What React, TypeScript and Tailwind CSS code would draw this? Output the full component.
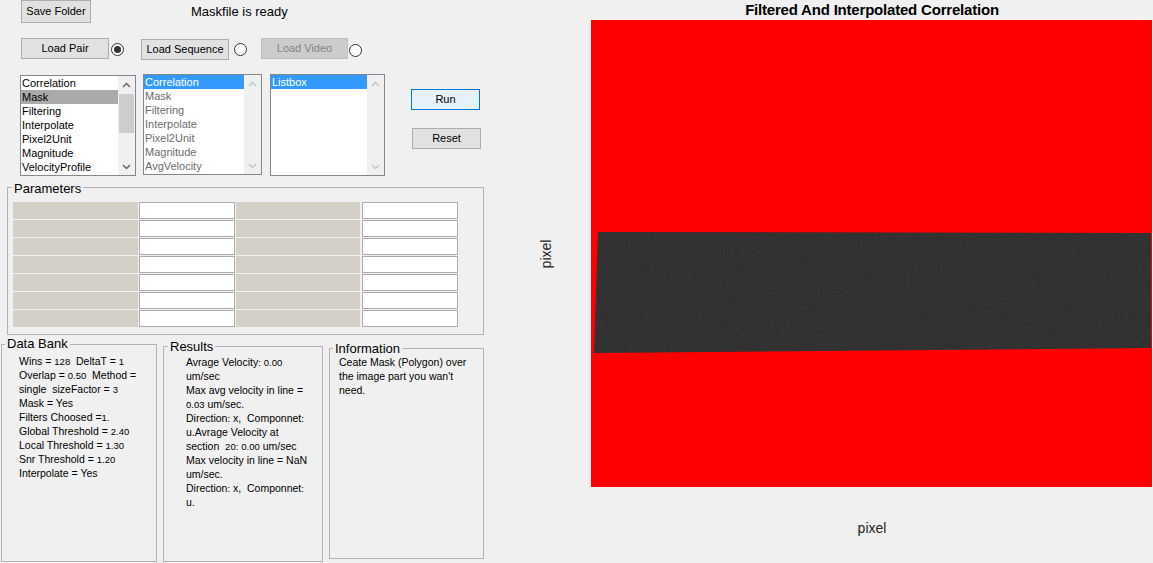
import React from "react";

function Btn({
  label,
  className = "",
  variant = "normal",
}: {
  label: string;
  className?: string;
  variant?: "normal" | "default" | "disabled";
}) {
  const v =
    variant === "default"
      ? "border-[#0078d7] bg-[#e5f1fb] text-black"
      : variant === "disabled"
      ? "border-[#bfbfbf] bg-[#cccccc] text-[#838383]"
      : "border-[#adadad] bg-[#e1e1e1] text-black";
  return (
    <div
      className={`shrink-0 border flex items-center justify-center text-[11px] leading-none whitespace-nowrap ${v} ${className}`}
    >
      {label}
    </div>
  );
}

function Radio({ checked = false, className = "" }: { checked?: boolean; className?: string }) {
  return (
    <div
      className={`shrink-0 w-[13px] h-[13px] rounded-full border border-[#333333] bg-white flex items-center justify-center ${className}`}
    >
      {checked && <div className="w-[7px] h-[7px] rounded-full bg-[#333333]" />}
    </div>
  );
}

function Chevron({ up, color }: { up: boolean; color: string }) {
  return (
    <svg width="9" height="6" viewBox="0 0 9 6">
      <path
        d={up ? "M1 5 L4.5 1.5 L8 5" : "M1 1 L4.5 4.5 L8 1"}
        fill="none"
        stroke={color}
        strokeWidth="1.4"
      />
    </svg>
  );
}

function Listbox({
  items,
  selected,
  selClass,
  textClass,
  className,
  thumb,
  arrowColor,
}: {
  items: string[];
  selected: number;
  selClass: string;
  textClass: string;
  className: string;
  thumb: boolean;
  arrowColor: string;
}) {
  return (
    <div className={`shrink-0 border border-[#828790] bg-white flex overflow-hidden ${className}`}>
      <div className="flex-1 flex flex-col">
        {items.map((it, i) => (
          <div
            key={i}
            className={`h-[14px] leading-[14px] text-[11px] pl-[1px] whitespace-nowrap ${
              i === selected ? selClass : textClass
            }`}
          >
            {it}
          </div>
        ))}
      </div>
      <div className="w-[17px] shrink-0 bg-[#f0f0f0] flex flex-col">
        <div className="h-[17px] flex items-center justify-center">
          <Chevron up color={arrowColor} />
        </div>
        {thumb && <div className="mt-[1px] mx-[1px] h-[39px] bg-[#cdcdcd]" />}
        <div className="flex-1" />
        <div className="h-[17px] flex items-center justify-center">
          <Chevron up={false} color={arrowColor} />
        </div>
      </div>
    </div>
  );
}

function Group({
  title,
  legendClass,
  className,
  children,
}: {
  title: string;
  legendClass: string;
  className: string;
  children?: React.ReactNode;
}) {
  return (
    <div className={`relative shrink-0 border border-[#b4b4b4] ${className}`}>
      <span
        className={`absolute bg-[#f0f0f0] px-[2px] text-[13px] leading-[15px] text-black whitespace-nowrap ${legendClass}`}
      >
        {title}
      </span>
      {children}
    </div>
  );
}

function N({ children }: { children: React.ReactNode }) {
  return <span className="text-[9.5px]">{children}</span>;
}

function Line({ children }: { children: React.ReactNode }) {
  return <div className="h-[14px] leading-[14px] text-[10.5px] whitespace-nowrap text-black">{children}</div>;
}

export default function App() {
  const rows = [0, 1, 2, 3, 4, 5, 6];
  return (
    <div className="w-[1153px] h-[563px] bg-[#f0f0f0] flex overflow-hidden font-['Liberation_Sans',Arial,sans-serif] text-black">
      {/* Left column */}
      <div className="w-[490px] shrink-0 flex flex-col">
        {/* Row 1 */}
        <div className="flex items-start h-[23px]">
          <Btn label="Save Folder" className="ml-[21px] w-[70px] h-[23px]" />
          <span className="ml-[100px] text-[13px] leading-[23px] whitespace-nowrap">Maskfile is ready</span>
        </div>
        {/* Row 2 */}
        <div className="flex items-start h-[22px] mt-[15px]">
          <Btn label="Load Pair" className="ml-[21px] w-[88px] h-[21px]" />
          <Radio checked className="ml-[2px] mt-[5px]" />
          <Btn label="Load Sequence" className="ml-[17px] mt-[1px] w-[88px] h-[21px]" />
          <Radio className="ml-[5px] mt-[5px]" />
          <Btn label="Load Video" variant="disabled" className="ml-[14px] w-[87px] h-[21px]" />
          <Radio className="ml-[1px] mt-[6px]" />
        </div>
        {/* Row 3 */}
        <div className="flex items-start mt-[14px] h-[102px]">
          <Listbox
            className="ml-[20px] mt-[1px] w-[116px] h-[101px]"
            items={["Correlation", "Mask", "Filtering", "Interpolate", "Pixel2Unit", "Magnitude", "VelocityProfile"]}
            selected={1}
            selClass="bg-[#aaaaaa] text-black"
            textClass="text-black"
            thumb
            arrowColor="#606060"
          />
          <Listbox
            className="ml-[7px] w-[119px] h-[101px]"
            items={["Correlation", "Mask", "Filtering", "Interpolate", "Pixel2Unit", "Magnitude", "AvgVelocity"]}
            selected={0}
            selClass="bg-[#3399ff] text-white"
            textClass="text-[#6d6d6d]"
            thumb={false}
            arrowColor="#c4c4c4"
          />
          <Listbox
            className="ml-[8px] w-[115px] h-[102px]"
            items={["Listbox"]}
            selected={0}
            selClass="bg-[#3399ff] text-white"
            textClass="text-[#6d6d6d]"
            thumb={false}
            arrowColor="#c4c4c4"
          />
          <div className="ml-[26px] flex flex-col">
            <Btn label="Run" variant="default" className="mt-[15px] w-[69px] h-[21px] text-[11px]" />
            <Btn label="Reset" className="mt-[18px] ml-[1px] w-[69px] h-[21px]" />
          </div>
        </div>
        {/* Parameters */}
        <Group
          title="Parameters"
          legendClass="left-[4px] top-[-7px]"
          className="ml-[7px] mt-[11px] w-[477px] h-[148px]"
        >
          <div className="pt-[14px] pl-[5px] flex flex-col">
            {rows.map((r) => (
              <div key={r} className="flex h-[18px]">
                <div className="w-[125px] h-[17px] bg-[#d4d0c8]" />
                <div className="ml-[1px] w-[96px] h-[17px] bg-white border border-[#adadad]" />
                <div className="ml-[1px] w-[124px] h-[17px] bg-[#d4d0c8]" />
                <div className="ml-[2px] w-[96px] h-[17px] bg-white border border-[#adadad]" />
              </div>
            ))}
          </div>
        </Group>
        {/* Bottom panels */}
        <div className="flex items-start">
          <Group
            title="Data Bank"
            legendClass="left-[3px] top-[-9px]"
            className="ml-[1px] mt-[9px] w-[156px] h-[218px]"
          >
            <div className="pt-[9px] pl-[17px] flex flex-col">
              <Line>
                Wins = <N>128</N>&nbsp; DeltaT = <N>1</N>
              </Line>
              <Line>
                Overlap = <N>0.50</N>&nbsp; Method =
              </Line>
              <Line>
                single&nbsp; sizeFactor = <N>3</N>
              </Line>
              <Line>Mask = Yes</Line>
              <Line>
                Filters Choosed =<N>1.</N>
              </Line>
              <Line>
                Global Threshold = <N>2.40</N>
              </Line>
              <Line>
                Local Threshold = <N>1.30</N>
              </Line>
              <Line>
                Snr Threshold = <N>1.20</N>
              </Line>
              <Line>Interpolate = Yes</Line>
            </div>
          </Group>
          <Group
            title="Results"
            legendClass="left-[4px] top-[-8px]"
            className="ml-[6px] mt-[11px] w-[160px] h-[216px]"
          >
            <div className="pt-[8px] pl-[22px] flex flex-col">
              <Line>
                Avrage Velocity<N>:</N> <N>0.00</N>
              </Line>
              <Line>um/sec</Line>
              <Line>Max avg velocity in line =</Line>
              <Line>
                <N>0.03</N> um/sec.
              </Line>
              <Line>
                Direction<N>:</N> x,&nbsp; Componnet<N>:</N>
              </Line>
              <Line>u.Avrage Velocity at</Line>
              <Line>
                section&nbsp; <N>20:</N> <N>0.00</N> um/sec
              </Line>
              <Line>Max velocity in line = NaN</Line>
              <Line>um/sec.</Line>
              <Line>
                Direction<N>:</N> x,&nbsp; Componnet<N>:</N>
              </Line>
              <Line>u.</Line>
            </div>
          </Group>
          <Group
            title="Information"
            legendClass="left-[3px] top-[-8px]"
            className="ml-[6px] mt-[13px] w-[155px] h-[211px]"
          >
            <div className="pt-[6px] pl-[9px] flex flex-col">
              <Line>Ceate Mask (Polygon) over</Line>
              <Line>the image part you wan't</Line>
              <Line>need.</Line>
            </div>
          </Group>
        </div>
      </div>

      {/* Right column: plot */}
      <div className="flex-1 flex">
        <div className="w-[101px] shrink-0 mt-[20px] h-[468px] pl-[11px] flex items-center justify-center">
          <span className="-rotate-90 text-[14px] leading-[16px] text-[#262626] whitespace-nowrap">pixel</span>
        </div>
        <div className="w-[562px] shrink-0 flex flex-col">
          <div className="h-[20px] text-center font-bold text-[15px] leading-[19px] text-black whitespace-nowrap tracking-[-0.2px]">
            Filtered And Interpolated Correlation
          </div>
          <svg width="562" height="468" viewBox="0 0 562 468" className="block">
            <defs>
              <filter id="noise" x="0" y="0" width="100%" height="100%">
                <feTurbulence type="fractalNoise" baseFrequency="0.6" numOctaves="2" seed="3" result="t" />
                <feColorMatrix
                  in="t"
                  type="matrix"
                  values="0 0 0 0 0.25  0 0 0 0 0.25  0 0 0 0 0.25  0.12 0.12 0.12 0 -0.12"
                  result="n"
                />
                <feComposite in="n" in2="SourceGraphic" operator="in" />
              </filter>
            </defs>
            <rect x="0" y="0" width="561" height="467" fill="#ff0000" />
            <polygon points="7,212 560,213 560,328 3,333" fill="#2c2c2c" />
            <polygon points="7,212 560,213 560,328 3,333" fill="#2c2c2c" filter="url(#noise)" />
          </svg>
          <div className="mt-[32px] text-center text-[14px] leading-[16px] text-[#262626]">pixel</div>
        </div>
      </div>
    </div>
  );
}
